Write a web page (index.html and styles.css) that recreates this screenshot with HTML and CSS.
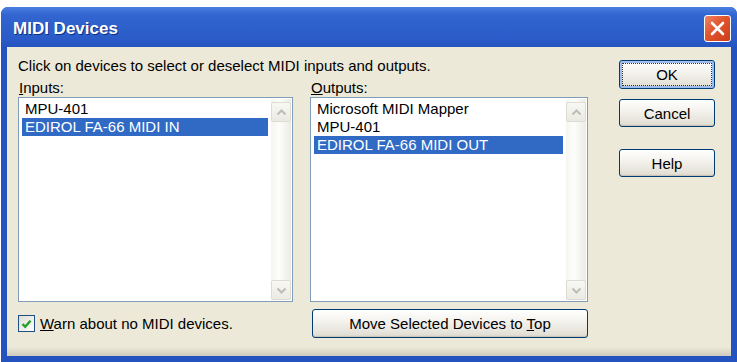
FILE: index.html
```html
<!DOCTYPE html>
<html lang="en">
<head>
  <meta charset="UTF-8">
  <title>MIDI Devices</title>
  <link rel="stylesheet" href="styles.css">
</head>
<body>
  <div class="window">
    <div class="titlebar">
      <span class="title">MIDI Devices</span>
      <button class="close" title="Close">
        <svg width="17" height="17" viewBox="0 0 17 17"><path d="M3 3 L14 14 M14 3 L3 14" stroke="#fff" stroke-width="2.6" stroke-linecap="round"/></svg>
      </button>
    </div>
    <div class="client">
      <div class="left-area">
        <p class="intro">Click on devices to select or deselect MIDI inputs and outputs.</p>
        <div class="lists">
          <div class="col">
            <div class="label"><u>I</u>nputs:</div>
            <div class="listbox">
              <ul class="items">
                <li>MPU-401</li>
                <li class="selected">EDIROL FA-66 MIDI IN</li>
              </ul>
              <div class="scrollbar">
                <div class="arrow"><svg width="11" height="7" viewBox="0 0 11 7"><path d="M1.5 5.5 L5.5 1.5 L9.5 5.5" fill="none" stroke="#bdbcb5" stroke-width="2"/></svg></div>
                <div class="track"></div>
                <div class="arrow"><svg width="11" height="7" viewBox="0 0 11 7"><path d="M1.5 1.5 L5.5 5.5 L9.5 1.5" fill="none" stroke="#bdbcb5" stroke-width="2"/></svg></div>
              </div>
            </div>
            <label class="check">
              <span class="box"><svg width="11" height="10" viewBox="0 0 11 10"><path d="M1.5 5 L4.2 7.8 L9.5 1.8" fill="none" stroke="#21a121" stroke-width="2.4"/></svg></span>
              <span><u>W</u>arn about no MIDI devices.</span>
            </label>
          </div>
          <div class="col out">
            <div class="label"><u>O</u>utputs:</div>
            <div class="listbox">
              <ul class="items">
                <li>Microsoft MIDI Mapper</li>
                <li>MPU-401</li>
                <li class="selected">EDIROL FA-66 MIDI OUT</li>
              </ul>
              <div class="scrollbar">
                <div class="arrow"><svg width="11" height="7" viewBox="0 0 11 7"><path d="M1.5 5.5 L5.5 1.5 L9.5 5.5" fill="none" stroke="#bdbcb5" stroke-width="2"/></svg></div>
                <div class="track"></div>
                <div class="arrow"><svg width="11" height="7" viewBox="0 0 11 7"><path d="M1.5 1.5 L5.5 5.5 L9.5 1.5" fill="none" stroke="#bdbcb5" stroke-width="2"/></svg></div>
              </div>
            </div>
            <button class="btn wide">Move Selected Devices to <u>T</u>op</button>
          </div>
        </div>
      </div>
      <div class="buttons">
        <button class="btn default">OK</button>
        <button class="btn">Cancel</button>
        <button class="btn help">Help</button>
      </div>
    </div>
    <div class="frame-bottom"></div>
  </div>
</body>
</html>
```

FILE: styles.css
```css
body {
  margin: 0;
  background: #fff;
  font-family: 'Liberation Sans', Arial, sans-serif;
  font-size: 15px;
  color: #000;
}
.window {
  margin: 7px 0 0 1px;
  width: 736px;
  height: 355px;
  background: #2453c0;
  border-radius: 7px 7px 0 0;
  display: flex;
  flex-direction: column;
}
.titlebar {
  height: 40px;
  display: flex;
  align-items: center;
  justify-content: space-between;
  padding: 0 6px 0 12px;
  background: linear-gradient(#4b7fe0, #3265cf 20%, #2a5bc8 80%, #2454c0);
  border-radius: 7px 7px 0 0;
}
.title {
  color: #fff;
  font-weight: bold;
  font-size: 17px;
  text-shadow: 1px 1px 0 #0d2f8a;
  margin-top: 4px;
}
.close {
  width: 27px;
  height: 27px;
  margin-top: 2px;
  padding: 0;
  border: 1px solid #fff;
  border-radius: 3px;
  background: linear-gradient(135deg, #ee8466, #e2542c 45%, #c93d18);
  display: flex;
  align-items: center;
  justify-content: center;
}
.client {
  flex: 1;
  margin: 0 6px;
  background: linear-gradient(#ece9d8 calc(100% - 9px), #cfcbbd);
  display: flex;
  justify-content: space-between;
  padding: 10px 16px 0 11px;
}
.intro {
  margin: 0;
  line-height: 17px;
}
.lists {
  display: flex;
  gap: 17px;
  margin-top: 6px;
}
.col {
  width: 275px;
  display: flex;
  flex-direction: column;
}
.col.out {
  width: 278px;
}
.label {
  line-height: 16px;
  height: 16px;
  padding-left: 1px;
}
.listbox {
  margin-top: 1px;
  height: 205px;
  box-sizing: border-box;
  border: 1px solid #7f9db9;
  background: #fff;
  display: flex;
  padding: 1px 1px 1px 3px;
}
.items {
  flex: 1;
  list-style: none;
  margin: 1px 3px 0 0;
  padding: 0;
}
.items li {
  height: 18px;
  line-height: 18px;
  padding-left: 3px;
  white-space: nowrap;
}
.items li.selected {
  background: #316ac5;
  color: #fff;
}
.scrollbar {
  width: 20px;
  display: flex;
  flex-direction: column;
  background: linear-gradient(90deg, #f5f5f0, #fdfdfb 40%, #ecebe4);
  padding-top: 3px;
}
.track {
  flex: 1;
}
.arrow {
  height: 20px;
  box-sizing: border-box;
  border: 1px solid #dedcd2;
  border-radius: 2px;
  background: linear-gradient(#f8f8f4, #ebeae2);
  display: flex;
  align-items: center;
  justify-content: center;
}
.check {
  margin-top: 13px;
  display: flex;
  align-items: center;
  gap: 5px;
}
.box {
  width: 17px;
  height: 17px;
  box-sizing: border-box;
  border: 1px solid #1c5180;
  background: linear-gradient(135deg, #dcdcd7, #fff);
  display: flex;
  align-items: center;
  justify-content: center;
}
.btn {
  font-family: inherit;
  font-size: 15px;
  color: #000;
  height: 29px;
  padding: 0;
  border: 1px solid #003c74;
  border-radius: 3px;
  background: linear-gradient(#fff, #f4f3ee 40%, #e3e0d6 90%, #d6d0c5);
  box-shadow: inset 0 -1px 0 #c9c4b6;
}
.btn.wide {
  margin-top: 7px;
  width: 276px;
  margin-left: 2px;
}
.buttons {
  display: flex;
  flex-direction: column;
  width: 96px;
}
.buttons .btn {
  height: 28px;
  margin-top: 10px;
}
.buttons .btn.default {
  margin-top: 3px;
  height: 29px;
  box-shadow: inset 0 0 0 2px #9fbdf0;
  outline: 1px dotted #333;
  outline-offset: -4px;
}
.buttons .btn.help {
  margin-top: 22px;
}
.frame-bottom {
  height: 6px;
}
```
